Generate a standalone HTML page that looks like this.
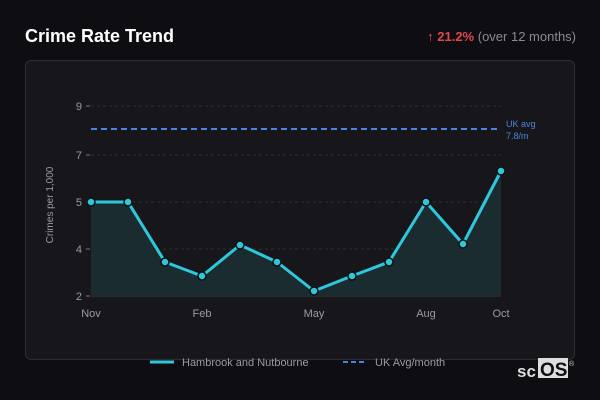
<!DOCTYPE html>
<html><head><style>
body{margin:0;width:600px;height:400px;background:#0e0e12;font-family:"Liberation Sans",sans-serif;overflow:hidden;position:relative}
.t{position:absolute;left:25px;top:26px;color:#fff;font-size:18px;font-weight:bold}
.r{position:absolute;right:24px;top:29px;font-size:13px;color:#8a8a90}
.r b{color:#e0474c}
.card{position:absolute;left:25px;top:60px;width:550px;height:300px;background:#17171b;border:1px solid #2c2c31;border-radius:6px;box-sizing:border-box}
svg{position:absolute;left:0;top:0}
</style></head><body>
<div class="t">Crime Rate Trend</div>
<div class="r"><b>↑ 21.2%</b> (over 12 months)</div>
<div class="card"></div>
<svg width="600" height="400" font-family="Liberation Sans, sans-serif">
<g stroke="#2e2e33" stroke-dasharray="3,3" stroke-width="1">
<line x1="91" x2="501" y1="106" y2="106"/><line x1="91" x2="501" y1="155" y2="155"/><line x1="91" x2="501" y1="202" y2="202"/><line x1="91" x2="501" y1="249" y2="249"/>
</g>
<line x1="91" x2="501" y1="296" y2="296" stroke="#3a3a40"/>
<g stroke="#777" ><line x1="86" x2="90" y1="106" y2="106"/><line x1="86" x2="90" y1="155" y2="155"/><line x1="86" x2="90" y1="202" y2="202"/><line x1="86" x2="90" y1="249" y2="249"/><line x1="86" x2="90" y1="296" y2="296"/></g>
<g fill="#9a9aa0" font-size="11" text-anchor="end"><text x="82" y="110">9</text><text x="82" y="159">7</text><text x="82" y="206">5</text><text x="82" y="253">4</text><text x="82" y="300">2</text></g>
<g fill="#9a9aa0" font-size="11" text-anchor="middle"><text x="91" y="317">Nov</text><text x="202" y="317">Feb</text><text x="314" y="317">May</text><text x="426" y="317">Aug</text><text x="501" y="317">Oct</text></g>
<text transform="translate(53,205) rotate(-90)" fill="#9a9aa0" font-size="10" text-anchor="middle">Crimes per 1,000</text>
<line x1="91" x2="497" y1="129" y2="129" stroke="#4a84e0" stroke-width="2" stroke-dasharray="6,4"/>
<text x="506" y="127" fill="#4a84e0" font-size="9">UK avg</text><text x="506" y="139" fill="#4a84e0" font-size="9">7.8/m</text>
<path d="M91,202 L128,202 L165,262 L202,276 L240,245 L277,262 L314,291 L352,276 L389,262 L426,202 L463,244 L501,171 L501,296 L91,296Z" fill="#1a2c30"/>
<polyline points="91,202 128,202 165,262 202,276 240,245 277,262 314,291 352,276 389,262 426,202 463,244 501,171" fill="none" stroke="#2ec8dc" stroke-width="3" stroke-linejoin="round"/>
<g fill="#2ec8dc" stroke="#111" stroke-width="1.5">
<circle cx="91" cy="202" r="4"/><circle cx="128" cy="202" r="4"/><circle cx="165" cy="262" r="4"/><circle cx="202" cy="276" r="4"/><circle cx="240" cy="245" r="4"/><circle cx="277" cy="262" r="4"/><circle cx="314" cy="291" r="4"/><circle cx="352" cy="276" r="4"/><circle cx="389" cy="262" r="4"/><circle cx="426" cy="202" r="4"/><circle cx="463" cy="244" r="4"/><circle cx="501" cy="171" r="4"/></g>
<line x1="150" x2="174" y1="362" y2="362" stroke="#2ec8dc" stroke-width="3"/>
<text x="182" y="366" fill="#9a9aa0" font-size="11">Hambrook and Nutbourne</text>
<line x1="343" x2="367" y1="362" y2="362" stroke="#4a84e0" stroke-width="2" stroke-dasharray="5,3"/>
<text x="375" y="366" fill="#9a9aa0" font-size="11">UK Avg/month</text>
<text x="517" y="377" fill="#ddd" font-size="17" font-weight="bold">sc</text>
<rect x="538" y="358" width="30" height="20" fill="#ddd"/>
<text x="540" y="376" fill="#0e0e12" font-size="19" font-weight="bold">OS</text>
<text x="569" y="366" fill="#ccc" font-size="7">®</text>
</svg>
</body></html>
